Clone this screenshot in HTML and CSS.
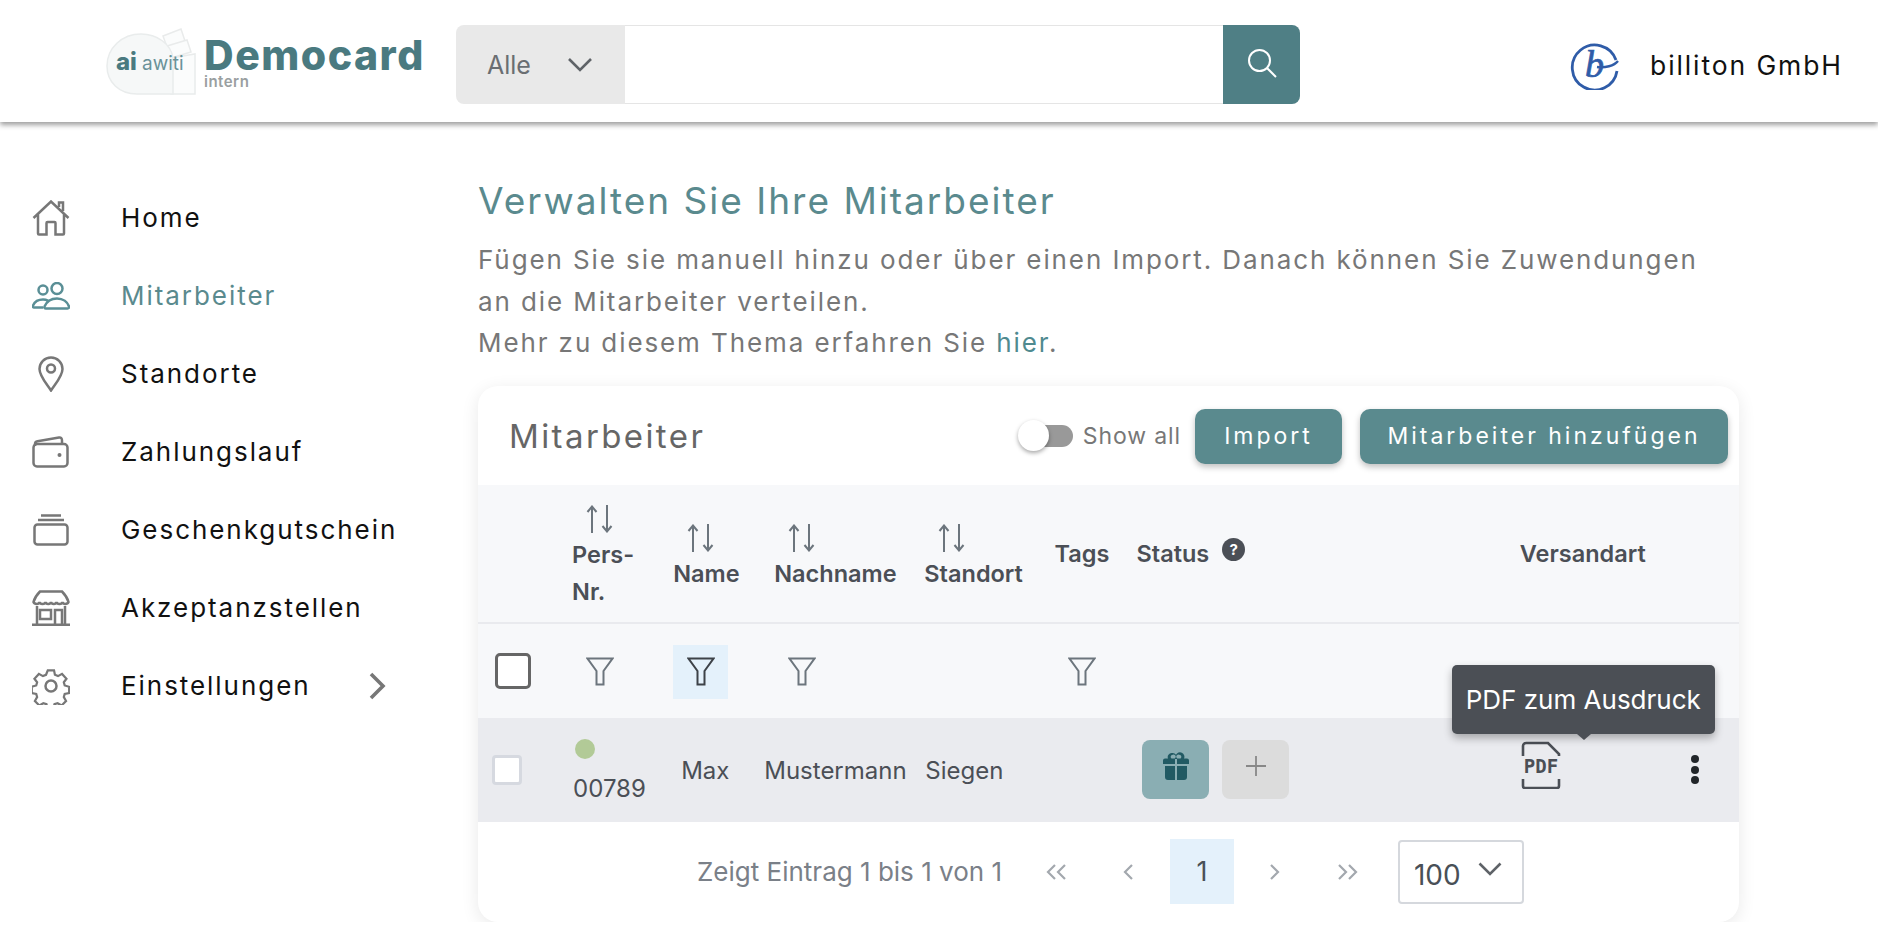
FILE: index.html
```html
<!DOCTYPE html>
<html lang="de">
<head>
    <meta charset="UTF-8">
    <meta name="viewport" content="width=device-width, initial-scale=1.0">
    <title>Democard - Mitarbeiter</title>
    <link rel="stylesheet" href="styles.css">
</head>
<body>
    <header class="topbar">
        <a class="logo" href="#">
            <svg class="logo-mark" width="92" height="68" viewBox="0 0 92 68">
                <g fill="#fbfcfc" stroke="#e9ebeb" stroke-width="1.500">
                    <path d="M58 8 76 1l4 12-18 6z"/>
                    <path d="M62 18 82 12l4 12-20 6z"/>
                    <path d="M66 30 90 26v40H66z"/>
                </g>
                <path d="M36 6C17 6 2 20 2 38c0 16 12 28 30 28h36V30C66 16 52 6 36 6z" fill="#f6f8f8" stroke="#e9ecec" stroke-width="1.500"/>
                <text class="logo-ai" x="11" y="42">ai</text>
                <text class="logo-awiti" x="37" y="42">awiti</text>
            </svg>
            <span class="logo-text">
                <span class="logo-name">Democard</span>
                <span class="logo-sub">intern</span>
            </span>
        </a>
        <form class="search">
            <div class="search-select">
                <span>Alle</span>
                <svg width="26" height="16" viewBox="0 0 26 16"><path d="M2 2l11 11L24 2" fill="none" stroke="#5f6368" stroke-width="2.6"/></svg>
            </div>
            <input class="search-input" type="text">
            <button class="search-button" type="button">
                <svg width="32" height="32" viewBox="0 0 32 32" fill="none" stroke="#fff" stroke-width="2"><circle cx="13.5" cy="13.5" r="10.5"/><path d="M21 21l9 9"/></svg>
            </button>
        </form>
        <div class="account">
            <svg class="account-logo" width="50" height="50" viewBox="0 0 50 50">
                <path d="M46 20A22.500 22.500 0 1 0 47 31" fill="none" stroke="#2f5ca8" stroke-width="2.800"/>
                <path d="M27 27c8 1 17-1 21-6" fill="none" stroke="#2f5ca8" stroke-width="2.400"/>
                <text class="account-b" x="15" y="37">b</text>
            </svg>
            <span>billiton GmbH</span>
        </div>
    </header>

    <div class="page">
        <nav class="sidebar">
            <a class="nav-item" href="#">
                <svg class="nav-icon" width="38" height="36" viewBox="0 0 38 36"><path d="M1.500 18 19 1.500l17.500 16.500M6 14v19.500a1 1 0 0 0 1 1h7.500V23a1 1 0 0 1 1-1h7a1 1 0 0 1 1 1v11.500H31a1 1 0 0 0 1-1V14M27 7V2.500h4V11"/></svg>
                <span>Home</span>
            </a>
            <a class="nav-item active" href="#">
                <svg class="nav-icon" width="38" height="28" viewBox="0 0 38 28"><circle cx="11" cy="8" r="4.500"/><circle cx="25" cy="6.500" r="5.500"/><path d="M11 25.500H2c-1 0-1.500-1-1-2 1.500-3.500 5-6 10-6 2 0 3.500.4 5 1.200M14 26.500c-1.500 0-2-1-1.500-2 2-4.500 6.500-8 12.500-8s10.500 3.500 12 8c.4 1-.2 2-1.500 2z"/></svg>
                <span>Mitarbeiter</span>
            </a>
            <a class="nav-item" href="#">
                <svg class="nav-icon" width="26" height="36" viewBox="0 0 26 36"><path d="M13 34.500C8 27 1.500 20 1.500 13a11.500 11.500 0 0 1 23 0c0 7-6.500 14-11.500 21.500z"/><circle cx="13" cy="12.500" r="4"/></svg>
                <span>Standorte</span>
            </a>
            <a class="nav-item" href="#">
                <svg class="nav-icon" width="38" height="32" viewBox="0 0 38 32"><path d="M3 10V8c0-1.500 1-2.500 2.500-2.800L27 1.500c2-.3 3 1 3 3V8"/><rect x="1.500" y="8" width="34" height="22.500" rx="3.500"/><circle class="nav-dot" cx="27.500" cy="19" r="2"/></svg>
                <span>Zahlungslauf</span>
            </a>
            <a class="nav-item" href="#">
                <svg class="nav-icon" width="38" height="32" viewBox="0 0 38 32"><path d="M9 1.500h20M6 6h26"/><rect x="2.500" y="10.500" width="33" height="20" rx="3"/></svg>
                <span>Geschenkgutschein</span>
            </a>
            <a class="nav-item" href="#">
                <svg class="nav-icon" width="38" height="36" viewBox="0 0 38 36"><path d="M8 1.500h22c3 3 5.500 7 6.500 10.500-1 2.500-5.500 2.500-6 0-.5 2.500-5.500 2.500-6 0-.5 2.500-5 2.500-5.500 0-.5 2.500-5 2.500-5.500 0-.5 2.500-5.500 2.500-6 0-.5 2.500-5 2.500-6 0C2.500 8.500 5 4.500 8 1.500zM5 16v18M33 16v18M0 34.800h38"/><rect x="8" y="20" width="11" height="9"/><path d="M23 34V20h7v14"/></svg>
                <span>Akzeptanzstellen</span>
            </a>
            <a class="nav-item" href="#">
                <svg class="nav-icon" width="38" height="38" viewBox="0 0 38 38"><path d="M15.500 1.500h7l1 5 3.500 1.500 4.500-2.500 5 5.500-3 4 1 3.500 5 1.500v7l-5 1-1 3.500 2.500 4.500-5 5-4.500-2.500-3.500 1-1 4.500h-7l-1-4.500-3.500-1-4.500 2.500-5-5 2.500-4.500-1-3.500-5-1v-7l5-1.500 1-3.500-3-4 5-5.500 4.500 2.500 3.500-1.500z" transform="translate(2 2) scale(.89)"/><circle cx="19" cy="19" r="5.500"/></svg>
                <span>Einstellungen</span>
                <svg class="nav-arrow" width="18" height="28" viewBox="0 0 18 28"><path d="M3 2l12 12L3 26" fill="none" stroke="#777" stroke-width="3.600"/></svg>
            </a>
        </nav>

        <main class="content">
            <h1 class="page-title">Verwalten Sie Ihre Mitarbeiter</h1>
            <p class="page-text">
                Fügen Sie sie manuell hinzu oder über einen Import. Danach können Sie Zuwendungen an die Mitarbeiter verteilen.<br>
                Mehr zu diesem Thema erfahren Sie <a href="#">hier</a>.
            </p>

            <section class="card">
                <div class="card-head">
                    <h2 class="card-title">Mitarbeiter</h2>
                    <div class="toggle"><span class="toggle-knob"></span></div>
                    <span class="toggle-label">Show all</span>
                    <button class="btn btn-import" type="button">Import</button>
                    <button class="btn btn-add" type="button">Mitarbeiter hinzufügen</button>
                </div>

                <table class="staff-table">
                    <colgroup>
                        <col class="col-check"><col class="col-pers"><col class="col-name"><col class="col-last">
                        <col class="col-place"><col class="col-tags"><col class="col-status"><col class="col-send"><col class="col-more">
                    </colgroup>
                    <thead>
                        <tr class="head-row">
                            <th></th>
                            <th class="sortable"><svg class="sort-icon" width="28" height="28" viewBox="0 0 28 28"><path d="M6 28V2M1.500 7 6 1.500 10.500 7M21 0v26M16.500 21l4.500 5.500 4.500-5.500"/></svg>Pers-<br>Nr.</th>
                            <th class="sortable"><svg class="sort-icon" width="28" height="28" viewBox="0 0 28 28"><path d="M6 28V2M1.500 7 6 1.500 10.500 7M21 0v26M16.500 21l4.500 5.500 4.500-5.500"/></svg>Name</th>
                            <th class="sortable"><svg class="sort-icon" width="28" height="28" viewBox="0 0 28 28"><path d="M6 28V2M1.500 7 6 1.500 10.500 7M21 0v26M16.500 21l4.500 5.500 4.500-5.500"/></svg>Nachname</th>
                            <th class="sortable"><svg class="sort-icon" width="28" height="28" viewBox="0 0 28 28"><path d="M6 28V2M1.500 7 6 1.500 10.500 7M21 0v26M16.500 21l4.500 5.500 4.500-5.500"/></svg>Standort</th>
                            <th>Tags</th>
                            <th>Status <span class="help">?</span></th>
                            <th>Versandart</th>
                            <th></th>
                        </tr>
                        <tr class="filter-row">
                            <td class="check-cell"><input class="check check-all" type="checkbox"></td>
                            <td><svg class="filter-icon" width="28" height="29" viewBox="0 0 28 29"><path d="M1.500 1.500h25L17.500 14v13.500h-7V14z"/></svg></td>
                            <td><span class="filter-active"><svg class="filter-icon" width="28" height="29" viewBox="0 0 28 29"><path d="M1.500 1.500h25L17.500 14v13.500h-7V14z"/></svg></span></td>
                            <td><svg class="filter-icon" width="28" height="29" viewBox="0 0 28 29"><path d="M1.500 1.500h25L17.500 14v13.500h-7V14z"/></svg></td>
                            <td></td>
                            <td><svg class="filter-icon" width="28" height="29" viewBox="0 0 28 29"><path d="M1.500 1.500h25L17.500 14v13.500h-7V14z"/></svg></td>
                            <td></td><td></td><td></td>
                        </tr>
                    </thead>
                    <tbody>
                        <tr class="data-row">
                            <td class="check-cell"><input class="check" type="checkbox"></td>
                            <td class="pers-cell"><span class="status-dot"></span>00789</td>
                            <td class="name-cell">Max</td>
                            <td class="last-cell">Mustermann</td>
                            <td class="place-cell">Siegen</td>
                            <td></td>
                            <td class="actions-cell">
                                <div class="actions">
                                    <button class="square-btn gift-btn" type="button">
                                        <svg width="26" height="28" viewBox="0 0 26 28" fill="#215a63"><path d="M9 1a4 4 0 0 0-4 5.500H2a2 2 0 0 0-2 2V12h12V7h2v5h12V8.500a2 2 0 0 0-2-2h-3A4 4 0 0 0 13 2.800 4 4 0 0 0 9 1zm0 2a2 2 0 0 1 2.800 3.500H8.500A2 2 0 0 1 9 3zm8 0a2 2 0 0 1 .5 3.500h-3.300A2 2 0 0 1 17 3zM2 14v11a3 3 0 0 0 3 3h7V14zm12 0v14h7a3 3 0 0 0 3-3V14z"/></svg>
                                    </button>
                                    <button class="square-btn plus-btn" type="button">
                                        <svg width="20" height="20" viewBox="0 0 20 20"><path d="M10 0v20M0 10h20" fill="none" stroke="#888" stroke-width="1.800"/></svg>
                                    </button>
                                </div>
                            </td>
                            <td class="send-cell">
                                <div class="pdf-wrap">
                                    <svg class="pdf-icon" width="40" height="48" viewBox="0 0 40 48">
                                        <path d="M2 15V5a3 3 0 0 1 3-3h22l11 11v2M2 38v7a2 2 0 0 0 2 2h32a2 2 0 0 0 2-2v-7" fill="none" stroke="#4b4f56" stroke-width="2.600"/>
                                        <text class="pdf-text" x="20" y="32">PDF</text>
                                    </svg>
                                    <div class="tooltip">PDF zum Ausdruck</div>
                                </div>
                            </td>
                            <td class="more-cell"><span class="kebab"><i></i><i></i><i></i></span></td>
                        </tr>
                    </tbody>
                </table>

                <div class="pagination">
                    <span class="page-info">Zeigt Eintrag 1 bis 1 von 1</span>
                    <a class="page-link" href="#"><svg width="22" height="16" viewBox="0 0 22 16"><path d="M10 1 3 8l7 7M20 1l-7 7 7 7"/></svg></a>
                    <a class="page-link" href="#"><svg width="11" height="16" viewBox="0 0 11 16"><path d="M9 1 2 8l7 7"/></svg></a>
                    <a class="page-link current" href="#">1</a>
                    <a class="page-link" href="#"><svg width="11" height="16" viewBox="0 0 11 16"><path d="M2 1l7 7-7 7"/></svg></a>
                    <a class="page-link" href="#"><svg width="22" height="16" viewBox="0 0 22 16"><path d="M2 1l7 7-7 7M12 1l7 7-7 7"/></svg></a>
                    <div class="page-size">
                        <span>100</span>
                        <svg width="24" height="14" viewBox="0 0 24 14"><path d="M1.500 1.500 12 12 22.500 1.500" fill="none" stroke="#5f6368" stroke-width="2.600"/></svg>
                    </div>
                </div>
            </section>
        </main>
    </div>
</body>
</html>
```

FILE: styles.css
```css
body {
    margin: 0;
    background-color: #fff;
    font-family: "Inter", "Liberation Sans", sans-serif;
    color: #4b4f56;
}
a {
    text-decoration: none;
}

/* top bar */
.topbar {
    display: flex;
    align-items: center;
    height: 122px;
    box-sizing: border-box;
    padding: 7px 0 0 105px;
    background-color: #fff;
    box-shadow: 0 3px 5px rgba(0, 0, 0, 0.38);
}
.logo {
    display: flex;
    align-items: center;
    width: 351px;
    gap: 7px;
}
.logo-mark {
    margin-top: -6px;
}
.logo-awiti {
    font-family: "Inter", sans-serif;
    font-size: 19px;
    fill: #6a9298;
}
.logo-ai {
    font-family: "Inter", sans-serif;
    font-size: 24px;
    font-weight: 800;
    fill: #4a7a80;
}
.logo-text {
    display: flex;
    flex-direction: column;
    align-items: flex-start;
    margin-top: -6px;
}
.logo-name {
    font-size: 41px;
    font-weight: 800;
    line-height: 39px;
    color: #4a7a80;
    letter-spacing: 1.500px;
}
.logo-sub {
    font-size: 15px;
    font-weight: 600;
    line-height: 13px;
    letter-spacing: 0.500px;
    color: #9a9fa1;
}
.search {
    display: flex;
    width: 844px;
    height: 79px;
}
.search-select {
    display: flex;
    align-items: center;
    justify-content: space-between;
    flex: none;
    width: 106px;
    padding: 0 32px 0 31px;
    background-color: #e9e9e9;
    border-radius: 8px 0 0 8px;
    font-size: 25px;
    color: #6a6e72;
}
.search-input {
    flex: 1;
    min-width: 0;
    box-sizing: border-box;
    border: 1px solid #e5e5e5;
    border-left: none;
    border-right: none;
}
.search-button {
    display: flex;
    align-items: center;
    justify-content: center;
    width: 77px;
    padding: 0 0 4px;
    border: none;
    border-radius: 0 8px 8px 0;
    background-color: #4f7f85;
}
.account {
    display: flex;
    align-items: center;
    gap: 30px;
    margin-left: 270px;
    font-size: 26.500px;
    letter-spacing: 1.900px;
    color: #111;
}
.account-b {
    font-family: "Liberation Serif", serif;
    font-style: italic;
    font-size: 38px;
    fill: #2f5ca8;
    stroke: #2f5ca8;
    stroke-width: 0.700px;
}

/* page */
.page {
    display: flex;
}
.sidebar {
    flex: none;
    width: 478px;
    box-sizing: border-box;
    padding: 57px 0 0 32px;
}
.nav-item {
    display: flex;
    align-items: center;
    width: 354px;
    height: 78px;
    font-size: 26px;
    letter-spacing: 1.950px;
    color: #111;
}
.nav-item span {
    margin: -2px 0 0 51px;
}
.nav-icon {
    flex: none;
    width: 38px;
    fill: none;
    stroke: #777;
    stroke-width: 2.500;
}
.nav-dot {
    fill: #777;
    stroke: none;
}
.nav-item.active {
    color: #5a8a8e;
}
.nav-item.active .nav-icon {
    stroke: #5a8f96;
}
.nav-arrow {
    margin-left: auto;
}
.content {
    flex: none;
    width: 1261px;
}
.page-title {
    margin: 56px 0 0;
    font-size: 37px;
    font-weight: 400;
    line-height: 46px;
    letter-spacing: 2px;
    color: #5a8a8e;
}
.page-text {
    width: 1250px;
    margin: 15px 0 0;
    font-size: 26px;
    line-height: 41.500px;
    letter-spacing: 1.900px;
    color: #777;
}
.page-text a {
    color: #4f8a90;
}

/* card */
.card {
    margin-top: 22px;
    border-radius: 20px;
    background-color: #fff;
    box-shadow: 0 4px 18px rgba(0, 0, 0, 0.09);
}
.card-head {
    display: flex;
    align-items: center;
    height: 99px;
    box-sizing: border-box;
    padding: 2px 11px 0 31px;
}
.card-title {
    flex: 1;
    margin: 0;
    font-size: 33px;
    font-weight: 400;
    letter-spacing: 2.400px;
    color: #666;
}
.toggle {
    position: relative;
    width: 52px;
    height: 22px;
    border-radius: 11px;
    background-color: #999;
}
.toggle-knob {
    position: absolute;
    left: -3px;
    top: -5px;
    width: 31px;
    height: 31px;
    border-radius: 50%;
    background-color: #fff;
    box-shadow: 0 2px 4px rgba(0, 0, 0, 0.35);
}
.toggle-label {
    margin-left: 10px;
    font-size: 23px;
    letter-spacing: 0.900px;
    color: #777;
}
.btn {
    height: 55px;
    padding: 0;
    border: none;
    border-radius: 10px;
    background-color: #5a8a8e;
    box-shadow: 0 3px 6px rgba(0, 0, 0, 0.25);
    font-family: "Inter", sans-serif;
    font-size: 23px;
    letter-spacing: 3px;
    color: #fff;
}
.btn-import {
    width: 147px;
    margin-left: 14px;
}
.btn-add {
    width: 368px;
    margin-left: 18px;
}

/* table */
.staff-table {
    width: 100%;
    table-layout: fixed;
    border-collapse: collapse;
    font-size: 24px;
    line-height: 37px;
}
.col-check { width: 83px; }
.col-pers { width: 101px; }
.col-name { width: 101px; }
.col-last { width: 150px; }
.col-place { width: 130px; }
.col-tags { width: 82px; }
.col-status { width: 383px; }
.col-send { width: 172px; }
.col-more { width: 58px; }
.staff-table th, .staff-table td {
    padding: 0 0 0 12px;
    vertical-align: middle;
    text-align: left;
}
.staff-table th {
    padding-left: 11px;
    font-size: 23.500px;
    font-weight: 600;
}
.head-row {
    height: 138px;
    background-color: #f7f8fa;
    border-bottom: 2px solid #e9eaee;
}
.sort-icon {
    display: block;
    margin: 0 0 3px 14px;
    fill: none;
    stroke: #6c757d;
    stroke-width: 2;
}
.staff-table th.sortable {
    padding-top: 9px;
}
.help {
    position: relative;
    top: -7px;
    display: inline-block;
    width: 23px;
    height: 23px;
    margin-left: 7px;
    border-radius: 50%;
    background-color: #4b4f56;
    color: #fff;
    font-size: 15px;
    font-weight: 700;
    line-height: 23px;
    text-align: center;
}
.filter-row {
    height: 95px;
    background-color: #f7f8fa;
}
.filter-row td {
    line-height: 0;
}
.filter-row td:not(.check-cell) {
    padding-top: 2px;
}
.filter-icon {
    margin-left: 13px;
    fill: none;
    stroke: #6c757d;
    stroke-width: 2;
}
.filter-active {
    display: inline-flex;
    align-items: center;
    justify-content: center;
    width: 55px;
    height: 54px;
    margin-left: -1px;
    background-color: #e4f1fb;
}
.filter-active .filter-icon {
    margin: 0;
    stroke: #3d4248;
}
.staff-table .check-cell {
    padding-left: 14px;
}
.check {
    appearance: none;
    display: block;
    width: 30px;
    height: 30px;
    margin: 0;
    border: 3px solid #d6d9e0;
    border-radius: 4px;
    background-color: #fff;
}
.check-all {
    width: 36px;
    height: 36px;
    margin-left: 3px;
    border-color: #666;
    border-radius: 5px;
}
.data-row {
    height: 104px;
    background-color: #eaebef;
}
.status-dot {
    display: block;
    width: 20px;
    height: 20px;
    margin: 0 0 11px 2px;
    border-radius: 50%;
    background-color: #b2ca97;
}
.staff-table .pers-cell {
    padding-top: 7px;
}
.staff-table .name-cell {
    padding: 2px 0 0 19px;
}
.staff-table .last-cell {
    padding: 2px 0 0 1px;
}
.staff-table .place-cell {
    padding-top: 2px;
}
.staff-table .actions-cell {
    padding-left: 17px;
}
.actions {
    display: flex;
    gap: 13px;
}
.square-btn {
    display: flex;
    align-items: center;
    justify-content: center;
    width: 67px;
    height: 59px;
    padding: 0 0 7px;
    border: none;
    border-radius: 8px;
}
.gift-btn {
    background-color: #8aaeb3;
}
.plus-btn {
    background-color: #dcdcdc;
}
.staff-table .send-cell {
    padding: 0 0 9px 12px;
}
.pdf-wrap {
    position: relative;
    line-height: 0;
}
.pdf-text {
    font-family: "DejaVu Sans Mono", monospace;
    font-size: 19px;
    font-weight: 700;
    text-anchor: middle;
    fill: #4b4f56;
}
.tooltip {
    position: absolute;
    left: -69px;
    top: -76px;
    width: 263px;
    height: 69px;
    border-radius: 5px;
    background-color: #4b4f55;
    box-shadow: 0 4px 8px rgba(0, 0, 0, 0.3);
    color: #fff;
    font-size: 26px;
    line-height: 69px;
    text-align: center;
    white-space: nowrap;
}
.tooltip::after {
    content: "";
    position: absolute;
    left: 125px;
    bottom: -6px;
    border-left: 7px solid transparent;
    border-right: 7px solid transparent;
    border-top: 6px solid #4b4f55;
}
.kebab {
    display: flex;
    flex-direction: column;
    gap: 2.500px;
    align-items: center;
    width: 8px;
}
.kebab i {
    width: 8px;
    height: 8px;
    border-radius: 50%;
    background-color: #212529;
}
.staff-table .more-cell {
    padding-left: 10px;
}

/* pagination */
.pagination {
    display: flex;
    align-items: center;
    height: 100px;
    padding-left: 219px;
    box-sizing: border-box;
}
.page-info {
    margin-right: 22px;
    font-size: 26px;
    color: #7a8088;
}
.page-link {
    display: flex;
    align-items: center;
    justify-content: center;
    width: 64px;
    height: 65px;
    margin-right: 9px;
    font-size: 27px;
    color: #495057;
}
.page-link svg {
    fill: none;
    stroke: #a3a8ae;
    stroke-width: 2.200;
}
.page-link.current {
    background-color: #e4f1fb;
}
.page-size {
    display: flex;
    align-items: center;
    justify-content: space-between;
    width: 126px;
    height: 64px;
    box-sizing: border-box;
    margin-left: 9px;
    padding: 0 20px 0 14px;
    border: 2px solid #d5d8dd;
    border-radius: 4px;
    font-size: 28px;
    color: #495057;
}
.page-size span {
    padding-top: 6px;
}
.page-size svg {
    margin-bottom: 6px;
}
```
